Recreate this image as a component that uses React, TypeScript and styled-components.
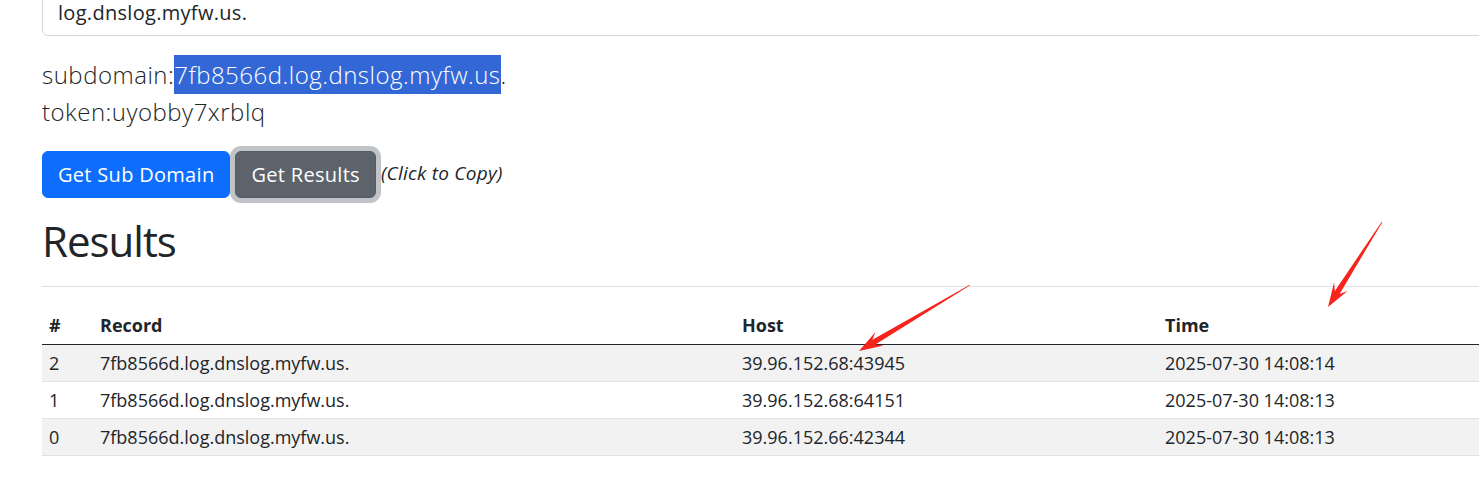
import React from 'react';
import styled, { createGlobalStyle } from 'styled-components';

type Point = [number, number];

interface Row {
  id: number;
  record: string;
  host: string;
  time: string;
}

const rows: Row[] = [
  { id: 2, record: '7fb8566d.log.dnslog.myfw.us.', host: '39.96.152.68:43945', time: '2025-07-30 14:08:14' },
  { id: 1, record: '7fb8566d.log.dnslog.myfw.us.', host: '39.96.152.68:64151', time: '2025-07-30 14:08:13' },
  { id: 0, record: '7fb8566d.log.dnslog.myfw.us.', host: '39.96.152.66:42344', time: '2025-07-30 14:08:13' },
];

// tapered arrow with a notched head, like the ones a screenshot tool draws
const arrowPoints = (tail: Point, tip: Point, headLen = 24, headHalf = 8, shaftEnd = 2.8) => {
  const dx = tip[0] - tail[0];
  const dy = tip[1] - tail[1];
  const len = Math.hypot(dx, dy);
  const ux = dx / len;
  const uy = dy / len;
  const nx = -uy;
  const ny = ux;
  const wing: Point = [tip[0] - ux * headLen, tip[1] - uy * headLen];
  const neck: Point = [tip[0] - ux * headLen * 0.72, tip[1] - uy * headLen * 0.72];
  const pts: Point[] = [
    [tail[0] + nx * 0.4, tail[1] + ny * 0.4],
    [neck[0] + nx * shaftEnd, neck[1] + ny * shaftEnd],
    [wing[0] + nx * headHalf, wing[1] + ny * headHalf],
    tip,
    [wing[0] - nx * headHalf, wing[1] - ny * headHalf],
    [neck[0] - nx * shaftEnd, neck[1] - ny * shaftEnd],
    [tail[0] - nx * 0.4, tail[1] - ny * 0.4],
  ];
  return pts.map(p => `${p[0].toFixed(1)},${p[1].toFixed(1)}`).join(' ');
};

const App: React.FC = () => {
  return (
    <Page>
      <GlobalStyle />
      <Container>
        <DomainInput readOnly value="log.dnslog.myfw.us." />

        <Lead>
          subdomain:<Selected>7fb8566d.log.dnslog.myfw.us</Selected>.
          <br />
          token:uyobby7xrblq
        </Lead>

        <Actions>
          <Button $variant="primary">Get Sub Domain</Button>
          <Button $variant="secondary" $focused>Get Results</Button>
          <Hint>(Click to Copy)</Hint>
        </Actions>

        <Heading>Results</Heading>
        <Rule />

        <Table>
          <colgroup>
            <col style={{ width: 51 }} />
            <col style={{ width: 642 }} />
            <col style={{ width: 423 }} />
            <col />
          </colgroup>
          <thead>
            <tr>
              <Th>#</Th>
              <Th>Record</Th>
              <Th>Host</Th>
              <Th>Time</Th>
            </tr>
          </thead>
          <tbody>
            {rows.map((r, i) => (
              <Tr key={r.id} $striped={i % 2 === 0}>
                <Td>{r.id}</Td>
                <Td>{r.record}</Td>
                <Td>{r.host}</Td>
                <Td>{r.time}</Td>
              </Tr>
            ))}
          </tbody>
        </Table>
      </Container>

      <Annotations viewBox="0 0 1479 481">
        <polygon points={arrowPoints([970, 285], [859, 351])} />
        <polygon points={arrowPoints([1382, 222], [1328, 307])} />
      </Annotations>
    </Page>
  );
};

export default App;

// Styled components

const GlobalStyle = createGlobalStyle`
  html, body {
    margin: 0;
    padding: 0;
    overflow: hidden;
    background: #fff;
  }
  body {
    font-family: "Open Sans", "Noto Sans", sans-serif;
    color: #212529;
  }
`;

const Page = styled.div`
  position: relative;
  width: 1479px;
  height: 481px;
  overflow: hidden;
`;

const Container = styled.div`
  width: 1520px;
  margin: -12px 0 0 42px;
`;

const DomainInput = styled.input`
  display: block;
  box-sizing: border-box;
  width: 100%;
  height: 48px;
  padding: 0 15px;
  border: 1px solid #d2d5d9;
  border-radius: 6px;
  font-family: inherit;
  font-size: 20px;
  letter-spacing: 0.3px;
  color: #212529;
  background: #fff;
  outline: none;
`;

const Lead = styled.p`
  margin: 20px 0 0;
  font-size: 24px;
  font-weight: 300;
  line-height: 37px;
  letter-spacing: 0.5px;
`;

const Selected = styled.span`
  background: #3367d6;
  color: #fff;
  padding: 3px 0;
`;

const Actions = styled.div`
  display: flex;
  align-items: center;
  gap: 5px;
  margin-top: 21px;
`;

const Button = styled.button<{ $variant: 'primary' | 'secondary'; $focused?: boolean }>`
  box-sizing: border-box;
  height: 47px;
  padding: 0 15px;
  border: 1px solid ${p => (p.$variant === 'primary' ? '#0d6efd' : '#565e64')};
  border-radius: 6px;
  background: ${p => (p.$variant === 'primary' ? '#0d6efd' : '#5c636a')};
  color: #fff;
  font-family: inherit;
  font-size: 20px;
  letter-spacing: 0.3px;
  cursor: pointer;
  box-shadow: ${p => (p.$focused ? '0 0 0 5px rgba(130, 138, 145, 0.5)' : 'none')};
`;

const Hint = styled.i`
  margin-top: -3px;
  font-size: 19px;
  letter-spacing: 0.25px;
`;

const Heading = styled.h1`
  margin: 18px 0 0;
  font-size: 42px;
  font-weight: 400;
  line-height: 50px;
  letter-spacing: -1px;
`;

const Rule = styled.hr`
  margin: 20px 0 0;
  height: 1px;
  border: none;
  background: #dfdfe5;
`;

const Table = styled.table`
  width: 100%;
  margin-top: 20px;
  border-collapse: collapse;
  table-layout: fixed;
  font-size: 18px;
`;

const Th = styled.th`
  text-align: left;
  font-weight: 700;
  padding: 4px 7px;
  line-height: 29px;
  border-bottom: 1px solid #212529;
`;

const Tr = styled.tr<{ $striped: boolean }>`
  background: ${p => (p.$striped ? '#f2f2f2' : '#fff')};
`;

const Td = styled.td`
  padding: 4px 7px;
  line-height: 28px;
  border-bottom: 1px solid #dee2e6;
  white-space: nowrap;
`;

const Annotations = styled.svg`
  position: absolute;
  top: 0;
  left: 0;
  width: 1479px;
  height: 481px;
  pointer-events: none;
  fill: #f6241b;
`;
